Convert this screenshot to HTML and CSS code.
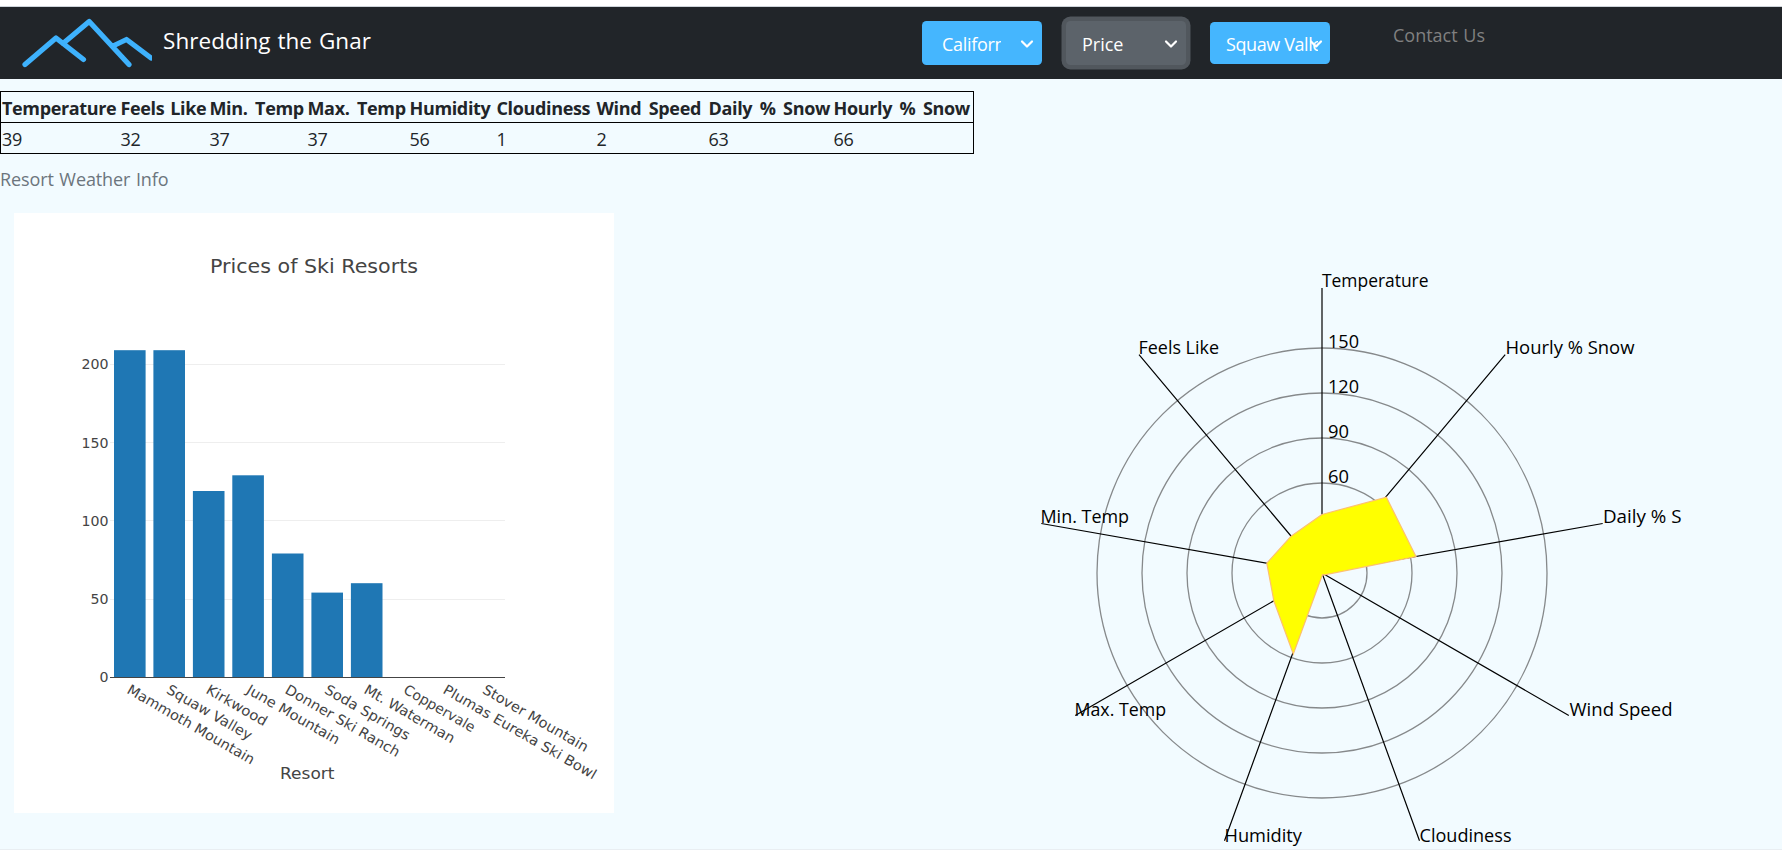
FILE: index.html
```html
<!DOCTYPE html>
<html lang="en">
<head>
<meta charset="utf-8">
<title>Shredding the Gnar</title>
<link rel="stylesheet" href="styles.css">
</head>
<body>
<nav class="navbar">
  <svg class="logo" width="130" height="50" viewBox="0 0 130 50">
    <path d="M3 46.500L34 20L61.500 41.500M41 25.500L67.200 3.500L107 46.500M92 27.500L104.500 21.500L129 40"/>
  </svg>
  <span class="brand">Shredding the Gnar</span>
  <div class="filters">
    <button class="select select-state"><span class="value">California</span><svg class="caret" width="14" height="10" viewBox="0 0 14 10"><path d="M2 2.500L7 7.500L12 2.500"/></svg></button>
    <button class="select select-metric"><span class="value">Price</span><svg class="caret" width="14" height="10" viewBox="0 0 14 10"><path d="M2 2.500L7 7.500L12 2.500"/></svg></button>
    <button class="select select-resort"><span class="value">Squaw Valley</span><svg class="caret" width="14" height="10" viewBox="0 0 14 10"><path d="M2 2.500L7 7.500L12 2.500"/></svg></button>
  </div>
  <a class="contact">Contact Us</a>
</nav>

<table class="weather">
  <caption>Resort Weather Info</caption>
  <colgroup><col class="c1"><col class="c2"><col class="c3"><col class="c4"><col class="c5"><col class="c6"><col class="c7"><col class="c8"><col class="c9"></colgroup>
  <thead><tr><th>Temperature</th><th>Feels Like</th><th>Min. Temp</th><th>Max. Temp</th><th>Humidity</th><th>Cloudiness</th><th>Wind Speed</th><th>Daily % Snow</th><th>Hourly % Snow</th></tr></thead>
  <tbody><tr><td>39</td><td>32</td><td>37</td><td>37</td><td>56</td><td>1</td><td>2</td><td>63</td><td>66</td></tr></tbody>
</table>

<main class="charts">
  <svg class="bar-chart" width="600" height="600" viewBox="14 213 600 600">
    <text class="title" x="210" y="272.500" textLength="208" lengthAdjust="spacingAndGlyphs">Prices of Ski Resorts</text>
    <path class="grid" d="M110 364.500H505M110 442.500H505M110 520.500H505M110 599.500H505"/>
    <g class="bars">
      <rect x="114" y="350.200" width="31.600" height="326.800"/>
      <rect x="153.400" y="350.200" width="31.600" height="326.800"/>
      <rect x="192.900" y="491" width="31.600" height="186"/>
      <rect x="232.300" y="475.300" width="31.600" height="201.700"/>
      <rect x="271.900" y="553.500" width="31.600" height="123.500"/>
      <rect x="311.400" y="592.600" width="31.600" height="84.400"/>
      <rect x="350.900" y="583.200" width="31.600" height="93.800"/>
    </g>
    <path class="axis" d="M110 677.500H505"/>
    <g class="ticks">
      <text x="81.500" y="369" textLength="27" lengthAdjust="spacingAndGlyphs">200</text>
      <text x="81.500" y="447.500" textLength="27" lengthAdjust="spacingAndGlyphs">150</text>
      <text x="81.500" y="526" textLength="27" lengthAdjust="spacingAndGlyphs">100</text>
      <text x="90.500" y="604" textLength="18" lengthAdjust="spacingAndGlyphs">50</text>
      <text x="99.500" y="682" textLength="9" lengthAdjust="spacingAndGlyphs">0</text>
    </g>
    <g class="ticks">
      <text transform="translate(126 692.500) rotate(30)" textLength="144.500" lengthAdjust="spacingAndGlyphs">Mammoth Mountain</text>
      <text transform="translate(165.500 692.500) rotate(30)" textLength="96" lengthAdjust="spacingAndGlyphs">Squaw Valley</text>
      <text transform="translate(205 692.500) rotate(30)" textLength="68" lengthAdjust="spacingAndGlyphs">Kirkwood</text>
      <text transform="translate(245.500 692.500) rotate(30)" textLength="105" lengthAdjust="spacingAndGlyphs">June Mountain</text>
      <text transform="translate(284 692.500) rotate(30)" textLength="130" lengthAdjust="spacingAndGlyphs">Donner Ski Ranch</text>
      <text transform="translate(323.500 692.500) rotate(30)" textLength="96" lengthAdjust="spacingAndGlyphs">Soda Springs</text>
      <text transform="translate(363 692.500) rotate(30)" textLength="102" lengthAdjust="spacingAndGlyphs">Mt. Waterman</text>
      <text transform="translate(402.500 692.500) rotate(30)" textLength="80" lengthAdjust="spacingAndGlyphs">Coppervale</text>
      <text transform="translate(442 692.500) rotate(30)" textLength="174.500" lengthAdjust="spacingAndGlyphs">Plumas Eureka Ski Bowl</text>
      <text transform="translate(481.500 692.500) rotate(30)" textLength="119.500" lengthAdjust="spacingAndGlyphs">Stover Mountain</text>
    </g>
    <text class="axis-title" x="280" y="779" textLength="54.500" lengthAdjust="spacingAndGlyphs">Resort</text>
  </svg>

  <svg class="radar" width="720" height="600" viewBox="962 249 720 600">
    <g class="rings">
      <circle cx="1322" cy="573" r="45"/><circle cx="1322" cy="573" r="90"/><circle cx="1322" cy="573" r="135"/><circle cx="1322" cy="573" r="180"/><circle cx="1322" cy="573" r="225"/>
    </g>
    <g class="labels">
      <text x="1328" y="482.500" textLength="21" lengthAdjust="spacingAndGlyphs">60</text>
      <text x="1328" y="437.500" textLength="21" lengthAdjust="spacingAndGlyphs">90</text>
      <text x="1328" y="393" textLength="31" lengthAdjust="spacingAndGlyphs">120</text>
      <text x="1328" y="348" textLength="31" lengthAdjust="spacingAndGlyphs">150</text>
    </g>
    <path class="spokes" d="M1322 573V288M1322 573L1139 354.700M1322 573L1041.300 523.500M1322 573L1075.200 715.500M1322 573L1224.500 840.800M1322 573L1419.500 840.800M1322 573L1568.800 715.500M1322 573L1602.700 523.500M1322 573L1505.200 354.700"/>
    <g class="labels">
      <text x="1322" y="286.700" textLength="106.500" lengthAdjust="spacingAndGlyphs">Temperature</text>
      <text x="1138.500" y="353.700" textLength="80.500" lengthAdjust="spacingAndGlyphs">Feels Like</text>
      <text x="1040.500" y="523" textLength="88.500" lengthAdjust="spacingAndGlyphs">Min. Temp</text>
      <text x="1074.500" y="715.700" textLength="91.500" lengthAdjust="spacingAndGlyphs">Max. Temp</text>
      <text x="1224.500" y="841.700" textLength="77.500" lengthAdjust="spacingAndGlyphs">Humidity</text>
      <text x="1419.500" y="841.700" textLength="92" lengthAdjust="spacingAndGlyphs">Cloudiness</text>
      <text x="1569.500" y="715.700" textLength="103" lengthAdjust="spacingAndGlyphs">Wind Speed</text>
      <text x="1603" y="523" textLength="78.500" lengthAdjust="spacingAndGlyphs">Daily % S</text>
      <text x="1505.500" y="353.700" textLength="129" lengthAdjust="spacingAndGlyphs">Hourly % Snow</text>
    </g>
    <path class="area" d="M1322 514.500L1291.100 536.200L1266.800 563.200L1273.900 601L1293.300 654L1322.500 574.600L1324.600 574.800L1416 556.600L1386.400 497.200Z"/>
  </svg>
</main>
</body>
</html>
```

FILE: styles.css
```css
* { box-sizing: border-box; }
html { background: #fff; }
body {
  margin: 0;
  height: 850px;
  overflow: hidden;
  display: flex;
  flex-direction: column;
  align-items: flex-start;
  background: #f2fbff;
  border-top: 6px solid #fff;
  border-bottom: 1px solid #e9eef2;
  color: #212529;
  font-family: "Open Sans", "Noto Sans", sans-serif;
  font-size: 18px;
}
.navbar {
  flex: none;
  width: 100%;
  height: 73px;
  display: flex;
  align-items: flex-start;
  padding-left: 22px;
  background: #212529;
  border-top: 1px solid #ced4da;
}
.logo { margin-top: 11px; overflow: hidden; }
.logo path { fill: none; stroke: #3eb2fd; stroke-width: 5.2; stroke-linecap: round; stroke-linejoin: round; }
.brand {
  width: 759px;
  margin: 18px 0 0 11px;
  line-height: 32px;
  font-size: 22.5px;
  word-spacing: 1px;
  letter-spacing: 0.04px;
  color: #fff;
  white-space: nowrap;
}
.filters { display: flex; gap: 24px; padding-top: 14px; }
.select {
  width: 120px;
  height: 44px;
  display: flex;
  align-items: center;
  padding: 1px 8px 0 20px;
  border: 0;
  border-radius: 4.5px;
  background: #45b6fe;
  color: #fff;
  font: inherit;
  text-align: left;
}
.value { flex: none; width: 59px; overflow: hidden; white-space: nowrap; letter-spacing: -0.3px; line-height: 26px; }
.caret { margin-left: auto; flex: none; }
.caret path { fill: none; stroke: #fff; stroke-width: 2.2; stroke-linecap: round; stroke-linejoin: round; }
.select-metric { padding-left: 16px; background: #5c636a; box-shadow: 0 0 0 4.5px #51575d; }
.select-metric .value { letter-spacing: 0; }
.select-resort { height: 42px; margin-top: 1px; padding: 1px 7px 0 16px; }
.select-resort .value { width: 92px; letter-spacing: -0.4px; }
.select-resort .caret { margin-left: -9px; }
.contact { margin: 14px 0 0 63px; line-height: 28px; color: #808080; letter-spacing: 0; word-spacing: 1px; }

.weather {
  flex: none;
  width: 974px;
  margin-top: 12px;
  table-layout: fixed;
  border-collapse: collapse;
  caption-side: bottom;
  white-space: nowrap;
}
.weather caption { padding-top: 11px; text-align: left; line-height: 28px; color: #6c757d; letter-spacing: -0.1px; word-spacing: 1px; }
.weather tr { height: 31px; border: 1px solid #000; }
.weather th, .weather td { padding: 2px 0 0 2px; text-align: left; line-height: 26px; }
.weather th:first-child, .weather td:first-child { padding-left: 1px; }
.weather th { font-weight: 700; letter-spacing: -0.35px; word-spacing: 3.2px; }
.weather th:nth-child(2) { word-spacing: 1.5px; }
.weather td { letter-spacing: -0.3px; }
.c1 { width: 118px; }
.c2 { width: 89px; }
.c3 { width: 98px; }
.c4 { width: 102px; }
.c5 { width: 87px; }
.c6 { width: 100px; }
.c7 { width: 112px; }
.c8 { width: 125px; }

.charts { display: flex; align-items: flex-start; gap: 348px; padding: 20px 0 0 14px; }
.bar-chart { flex: none; background: #fff; font-family: "DejaVu Sans", Verdana, sans-serif; fill: #444; }
.title { font-size: 20px; }
.ticks { font-size: 14px; }
.axis-title { font-size: 16.500px; }
.grid { stroke: #eee; }
.axis { stroke: #444; }
.bars { fill: #1f77b4; }
.radar { flex: none; margin-top: 36px; }
.rings { fill: none; stroke: #86898b; stroke-width: 1.3; }
.spokes { fill: none; stroke: #000; stroke-width: 1.2; }
.labels { fill: #000; }
.area { fill: #ff0; stroke: #fdc070; stroke-width: 1.2; }
```
